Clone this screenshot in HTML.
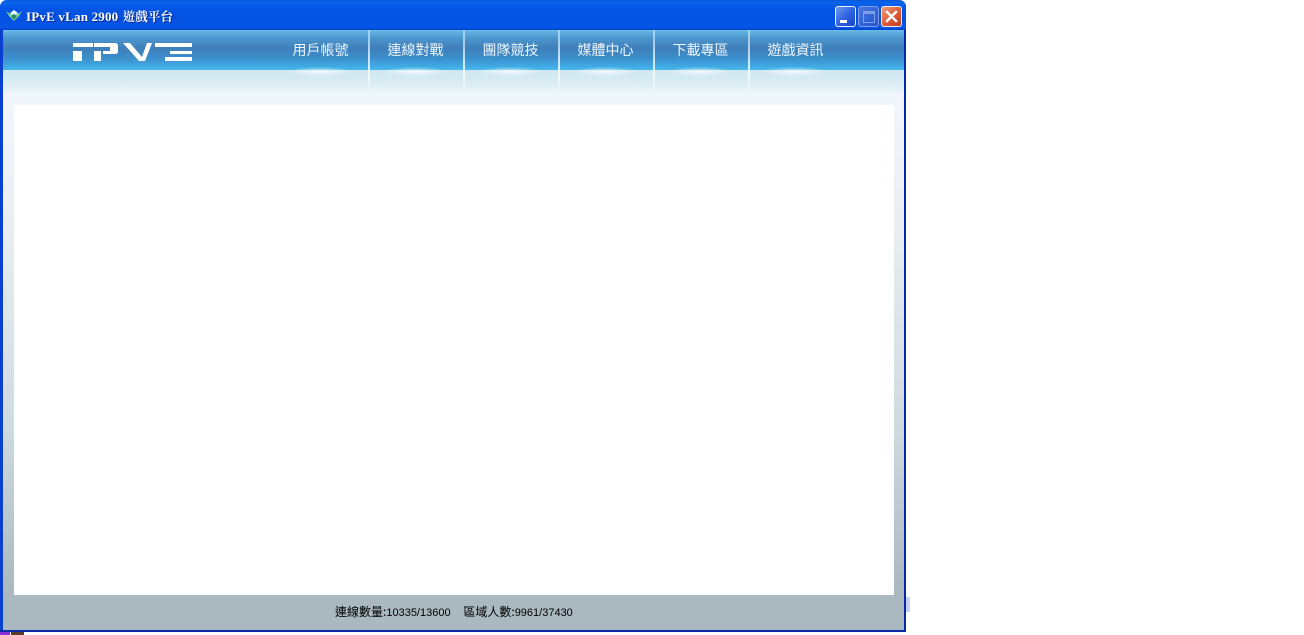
<!DOCTYPE html>
<html>
<head>
<meta charset="utf-8">
<style>
html,body{margin:0;padding:0;background:#fff;width:1304px;height:635px;overflow:hidden;position:relative}
*{box-sizing:border-box}
.a{position:absolute}
#win{left:0;top:0;width:906px;height:632px;background:linear-gradient(90deg,#0a3fd0 0,#0a3fd0 903px,#0a26a8 904px);border-radius:7px 7px 0 0;overflow:hidden}
#bottom{left:0;top:630px;width:906px;height:2px;background:#0a2aa8}
#title{left:0;top:0;width:906px;height:30px;background:linear-gradient(#0a5ad8 0,#0a63ee 3px,#0455e6 8px,#0350e0 20px,#0657ea 27px,#0343c8 30px)}
#ttext{left:26px;top:8px;font:bold 13px/17px "Liberation Serif",serif;letter-spacing:.2px;color:#fff;text-shadow:1px 1px 0 #0a2a90;white-space:nowrap}
#ttext b{font:bold 12.5px/17px "Noto Serif CJK TC","Noto Sans CJK TC",serif;letter-spacing:0;margin-left:1px}
#body{left:3px;top:30px;width:901px;height:600px;background:linear-gradient(#f0f6fb 0,#f0f6fb 75px,#e8eef2 200px,#cfdade 400px,#aab8bf 560px,#aab8bf 600px)}
#nav{left:0;top:0;width:901px;height:40px;background:linear-gradient(#66bbe8 0,#4f9ad0 7px,#3f7fba 18px,#3c8cca 27px,#40a9e2 36px,#4ab8ec 40px)}
#glow{left:0;top:40px;width:901px;height:25px;background:linear-gradient(#cfe8f1 0,#d6eaf2 10px,#e6f2f7 20px,#f0f6fb 25px)}
.sep{top:0;width:1.5px;height:60px;background:linear-gradient(rgba(240,250,255,.45) 0,rgba(235,248,255,.75) 40%,#f0f8fb 85%,rgba(240,248,251,.4) 100%)}
.tab{top:11px;width:95px;text-align:center;font:14px/18px "WenQuanYi Zen Hei","Noto Sans CJK TC",sans-serif;color:#ecf7fe;white-space:nowrap}
.g{top:37px;width:66px;height:9px;background:radial-gradient(ellipse closest-side,rgba(255,255,255,.75),rgba(255,255,255,0))}
#content{left:14px;top:105px;width:880px;height:490px;background:#fff}
#status{left:335px;top:604px;font:12px/16px "WenQuanYi Zen Hei","Noto Sans CJK TC",sans-serif;color:#000;white-space:nowrap}
#status span{font:11px/16px "Liberation Sans",sans-serif}
.btn{top:6px;width:21px;height:21px;border-radius:3px;border:1px solid #e8f0ff}
#b1{left:835px;background:linear-gradient(135deg,#6f9af0,#2a5fe0 55%,#1c47c8)}
#b2{left:858px;background:linear-gradient(135deg,#4a78e0,#2f62d8 60%,#2a55c8);border-color:#7ea0ea}
#b3{left:881px;background:linear-gradient(135deg,#ee9a78,#dc5a35 55%,#c23c1c)}
</style>
</head>
<body>
<div class="a" style="left:906px;top:597px;width:4px;height:15px;background:#c8d0f8"></div>
<div class="a" style="left:0;top:620px;width:3px;height:15px;background:#6a20e0"></div>
<div class="a" style="left:0;top:632px;width:10px;height:3px;background:#8a30d8"></div>
<div class="a" style="left:11px;top:632px;width:13px;height:3px;background:#5a3a28"></div>

<div id="win" class="a">
  <div id="title" class="a"></div>
  <svg class="a" style="left:5px;top:9px" width="18" height="13" viewBox="0 0 18 13">
    <path d="M1 2 L5 5 L9 1 L13 5 L17 2 L14 7 L9 12 L4 7Z" fill="#7fd89a"/>
    <path d="M5 4 L9 1 L13 4 L9 7Z" fill="#e8f6ff"/>
    <path d="M6 7 L9 5 L12 7 L9 11Z" fill="#2a8a6a"/>
  </svg>
  <div id="ttext" class="a">IPvE vLan 2900 <b>遊戲平台</b></div>
  <div id="b1" class="a btn"><div class="a" style="left:4px;top:13px;width:7px;height:3px;background:#fff"></div></div>
  <div id="b2" class="a btn"><div class="a" style="left:4px;top:4px;width:12px;height:12px;border:1px solid #7ea0ea;border-top-width:3px"></div></div>
  <div id="b3" class="a btn">
    <svg class="a" style="left:3px;top:3px" width="13" height="13" viewBox="0 0 13 13"><path d="M2 2 L11 11 M11 2 L2 11" stroke="#fff" stroke-width="2.4" stroke-linecap="square"/></svg>
  </div>

  <div id="body" class="a">
    <div id="nav" class="a"></div>
    <div id="glow" class="a"></div>
    <div class="a g" style="left:284px"></div>
    <div class="a g" style="left:379px"></div>
    <div class="a g" style="left:474px"></div>
    <div class="a g" style="left:569px"></div>
    <div class="a g" style="left:664px"></div>
    <div class="a g" style="left:759px"></div>
    <div class="a sep" style="left:365px"></div>
    <div class="a sep" style="left:460px"></div>
    <div class="a sep" style="left:555px"></div>
    <div class="a sep" style="left:650px"></div>
    <div class="a sep" style="left:745px"></div>
    <div class="a tab" style="left:270px">用戶帳號</div>
    <div class="a tab" style="left:365px">連線對戰</div>
    <div class="a tab" style="left:460px">團隊競技</div>
    <div class="a tab" style="left:555px">媒體中心</div>
    <div class="a tab" style="left:650px">下載專區</div>
    <div class="a tab" style="left:745px">遊戲資訊</div>
  </div>
  <svg class="a" style="left:73px;top:43px" width="120" height="18" viewBox="0 0 120 18" fill="#fff">
    <path d="M0 0H20V4H0Z"/>
    <path d="M0 8H9V18H0Z"/>
    <path d="M21 0H42Q45 0 45 3V8Q45 11 42 11H30V8H37V4H21Z"/>
    <path d="M21 8H28V18H21Z"/>
    <path d="M50 0H57L69 14L74 0H79L72 18H66Z"/>
    <path d="M82 0H119V4H82Z"/>
    <path d="M97 8H119V11H97Z"/>
    <path d="M92 14H119V18H92Z"/>
  </svg>
  <div id="content" class="a"></div>
  <div id="bottom" class="a"></div>
  <div id="status" class="a">連線數量:<span>10335/13600</span>&nbsp;&nbsp;&nbsp;&nbsp;<span style="margin-left:2px"></span>區域人數:<span>9961/37430</span></div>
</div>
</body>
</html>
